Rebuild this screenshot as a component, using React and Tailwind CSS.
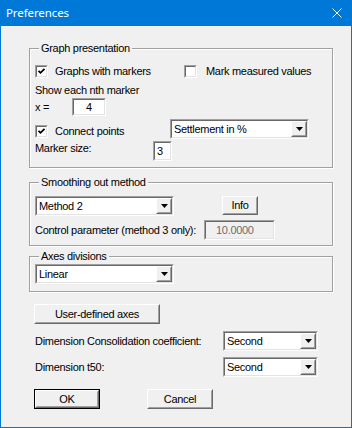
import React from 'react'

// Classic Win32 dialog pieces
function Sunken({ className = '', inner = 'bg-white', children }) {
  return (
    <div className={`border border-t-[#a0a0a0] border-l-[#a0a0a0] border-b-white border-r-white ${className}`}>
      <div className={`h-full w-full border border-t-[#696969] border-l-[#696969] border-b-[#e3e3e3] border-r-[#e3e3e3] ${inner}`}>
        {children}
      </div>
    </div>
  )
}

function Raised({ className = '', children }) {
  return (
    <div className={`border border-t-white border-l-white border-b-[#696969] border-r-[#696969] bg-[#f0f0f0] ${className}`}>
      <div className="h-full w-full border border-t-[#f0f0f0] border-l-[#f0f0f0] border-b-[#a0a0a0] border-r-[#a0a0a0] flex items-center justify-center">
        {children}
      </div>
    </div>
  )
}

function Checkbox({ checked, className = '' }) {
  return (
    <Sunken className={`w-[13px] h-[13px] shrink-0 ${className}`}>
      {checked && (
        <svg width="9" height="9" viewBox="0 0 9 9" className="block">
          <polyline points="1.5,3.8 3.5,5.8 7.5,1.8" fill="none" stroke="#000" strokeWidth="1.8" />
        </svg>
      )}
    </Sunken>
  )
}

function Select({ value, className = '' }) {
  return (
    <Sunken className={`h-[20px] shrink-0 ${className}`}>
      <div className="flex h-full items-stretch">
        <span className="flex-1 pl-[2px] leading-[16px] whitespace-nowrap">{value}</span>
        <Raised className="w-[16px] h-full">
          <svg width="7" height="4" viewBox="0 0 7 4" className="block">
            <polygon points="0,0 7,0 3.5,4" fill="#000" />
          </svg>
        </Raised>
      </div>
    </Sunken>
  )
}

function Button({ children, isDefault, className = '' }) {
  if (isDefault) {
    return (
      <div className={`border border-black ${className}`}>
        <Raised className="w-full h-full">{children}</Raised>
      </div>
    )
  }
  return <Raised className={className}>{children}</Raised>
}

function Group({ title, className = '', children }) {
  return (
    <fieldset className={`ml-[28px] w-[304px] pl-[5px] border border-[#a0a0a0] shadow-[inset_1px_1px_0_#fff,1px_1px_0_#fff] ${className}`}>
      <legend className="ml-[4px] px-[2px] leading-[14px] bg-[#f0f0f0]">{title}</legend>
      {children}
    </fieldset>
  )
}

export default function App() {
  return (
    <div className="w-[352px] h-[428px] bg-[#0078d7] flex flex-col px-px pb-px font-['Liberation_Sans',Arial,sans-serif] text-[11px] tracking-[-0.3px] text-black">
      <div className="h-[26px] shrink-0 flex items-center pl-[5px]">
        <span className="text-white text-[11.5px] tracking-[-0.1px] font-['Noto_Sans',sans-serif] leading-none">Preferences</span>
        <svg width="10" height="10" viewBox="0 0 10 10" className="ml-auto mr-[9px]">
          <path d="M0.5 0.5 L9.5 9.5 M9.5 0.5 L0.5 9.5" stroke="#fff" strokeWidth="1" />
        </svg>
      </div>

      <div className="flex-1 bg-[#f0f0f0] flex flex-col">
        <Group title="Graph presentation" className="mt-[15px] pb-[6px]">
          <div className="mt-[10px] h-[13px] flex items-center">
            <div className="w-[149px] flex items-center">
              <Checkbox checked />
              <span className="ml-[7px] leading-[13px]">Graphs with markers</span>
            </div>
            <Checkbox />
            <span className="ml-[9px] leading-[13px]">Mark measured values</span>
          </div>
          <div className="mt-[6px] leading-[13px]">Show each nth marker</div>
          <div className="mt-[1px] h-[18px] flex items-center">
            <span className="w-[37px]">x =</span>
            <Sunken className="w-[34px] h-[18px]">
              <div className="leading-[14px] text-center">4</div>
            </Sunken>
          </div>
          <div className="mt-[3px] h-[20px] flex items-start">
            <div className="w-[135px] mt-[6px] flex items-center">
              <Checkbox checked />
              <span className="ml-[7px] leading-[13px]">Connect points</span>
            </div>
            <Select value="Settlement in %" className="w-[139px]" />
          </div>
          <div className="mt-[2px] h-[20px] flex items-start">
            <span className="w-[118px] mt-[1px] leading-[13px]">Marker size:</span>
            <Sunken className="w-[19px] h-[20px]">
              <div className="pl-[2px] leading-[16px]">3</div>
            </Sunken>
          </div>
        </Group>

        <Group title="Smoothing out method" className="mt-[7px] pb-[5px]">
          <div className="mt-[7px] h-[20px] flex items-start">
            <Select value="Method 2" className="w-[139px]" />
            <Button className="ml-[48px] w-[36px] h-[19px]">Info</Button>
          </div>
          <div className="mt-[4px] h-[20px] flex items-center">
            <span className="w-[169px] whitespace-nowrap">Control parameter (method 3 only):</span>
            <Sunken className="w-[71px] h-[20px]" inner="bg-[#f0f0f0]">
              <div className="pl-[10px] leading-[16px] text-[#6d6d6d]">10.0000</div>
            </Sunken>
          </div>
        </Group>

        <Group title="Axes divisions" className="mt-[3px] pb-[7px]">
          <Select value="Linear" className="mt-[1px] w-[139px]" />
        </Group>

        <div className="ml-[33px] flex flex-col">
          <Button className="mt-[12px] w-[126px] h-[20px]">User-defined axes</Button>
          <div className="mt-[7px] h-[20px] flex items-center">
            <span className="ml-px w-[188px] whitespace-nowrap">Dimension Consolidation coefficient:</span>
            <Select value="Second" className="w-[95px]" />
          </div>
          <div className="mt-[6px] h-[20px] flex items-center">
            <span className="ml-px w-[188px]">Dimension t50:</span>
            <Select value="Second" className="w-[95px]" />
          </div>
          <div className="mt-[12px] flex">
            <Button isDefault className="w-[66px] h-[20px]">OK</Button>
            <Button className="ml-[47px] w-[66px] h-[20px]">Cancel</Button>
          </div>
        </div>
      </div>
    </div>
  )
}
